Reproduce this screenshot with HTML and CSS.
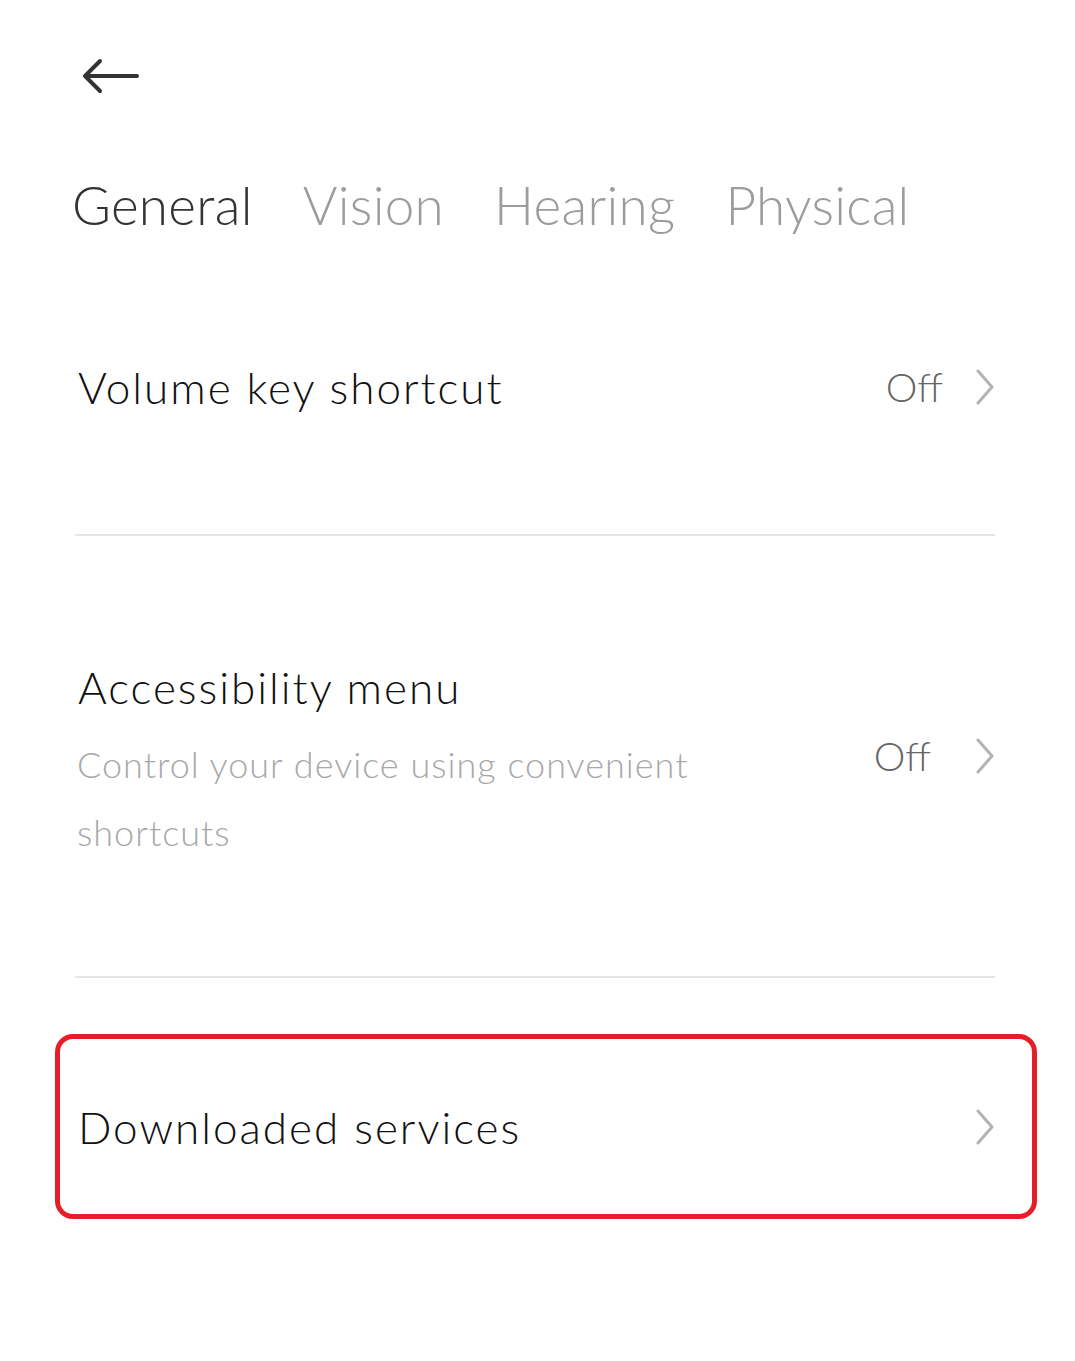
FILE: index.html
```html
<!DOCTYPE html>
<html>
<head>
<meta charset="utf-8">
<link rel="stylesheet" href="styles.css">
</head>
<body>
<div class="screen">
  <div class="topbar">
    <svg class="back" width="60" height="40" viewBox="0 0 60 40">
      <path d="M4 18 H56 M4 18 L19 3 M4 18 L19 33" fill="none" stroke="#333" stroke-width="4" stroke-linecap="round" stroke-linejoin="round"/>
    </svg>
  </div>
  <div class="tabs">
    <span class="tab active">General</span>
    <span class="tab">Vision</span>
    <span class="tab">Hearing</span>
    <span class="tab">Physical</span>
  </div>
  <div class="list">
    <div class="row row-one">
      <div class="title">Volume key shortcut</div>
      <div class="right"><span class="value">Off</span><svg class="chev" width="20" height="36" viewBox="0 0 20 36"><path d="M3 2 L17 18 L3 34" fill="none" stroke="#b3b3b3" stroke-width="3" stroke-linecap="round" stroke-linejoin="round"/></svg></div>
    </div>
    <div class="divider"></div>
    <div class="row row-two">
      <div class="texts">
        <div class="title">Accessibility menu</div>
        <div class="sub">Control your device using convenient shortcuts</div>
      </div>
      <div class="right right-low"><span class="value">Off</span><svg class="chev" width="20" height="36" viewBox="0 0 20 36"><path d="M3 2 L17 18 L3 34" fill="none" stroke="#b3b3b3" stroke-width="3" stroke-linecap="round" stroke-linejoin="round"/></svg></div>
    </div>
    <div class="divider"></div>
    <div class="highlight">
      <div class="row row-three">
        <div class="title">Downloaded services</div>
        <div class="right"><svg class="chev" width="20" height="36" viewBox="0 0 20 36"><path d="M3 2 L17 18 L3 34" fill="none" stroke="#b3b3b3" stroke-width="3" stroke-linecap="round" stroke-linejoin="round"/></svg></div>
      </div>
    </div>
  </div>
</div>
</body>
</html>
```

FILE: styles.css
```css
* { box-sizing: border-box; }
html, body { margin: 0; padding: 0; background: #fff; }
body {
  font-family: "Lato", "Open Sans", sans-serif;
  font-weight: 300;
  width: 1075px;
  height: 1361px;
  overflow: hidden;
}
.screen { width: 1075px; }
.topbar {
  height: 150px;
  padding: 58px 0 0 81px;
}
.back { display: block; }
.tabs {
  display: flex;
  gap: 50px;
  padding-left: 72px;
  height: 140px;
  padding-top: 20px;
}
.tab {
  font-size: 53px;
  color: #9c9c9c;
  line-height: 70px;
  letter-spacing: 0.3px;
}
.tab.active { color: #333; }
.list { padding: 0 80px 0 75px; }
.row {
  display: flex;
  justify-content: space-between;
  align-items: center;
}
.row-one { height: 244px; padding-bottom: 50px; }
.title {
  font-size: 44px;
  color: #111;
  letter-spacing: 2px;
  padding-left: 3px;
}
.right { display: flex; align-items: center; gap: 32px; }
.value { font-size: 40px; color: #666; }
.chev { display: block; }
.divider { height: 2px; background: #e6e6e6; }
.row-two { height: 440px; align-items: flex-start; }
.texts { width: 640px; padding-top: 125px; }
.sub {
  font-size: 36px;
  color: #a8a8a8;
  line-height: 68px;
  letter-spacing: 1px;
  padding-left: 2px;
  margin-top: 17px;
}
.right-low { align-self: center; gap: 44px; }
.highlight {
  margin: 56px -42px 0 -20px;
  border: 5px solid #e3202a;
  border-radius: 18px;
  height: 185px;
  padding: 0 37px 0 15px;
}
.row-three { height: 175px; }
```
